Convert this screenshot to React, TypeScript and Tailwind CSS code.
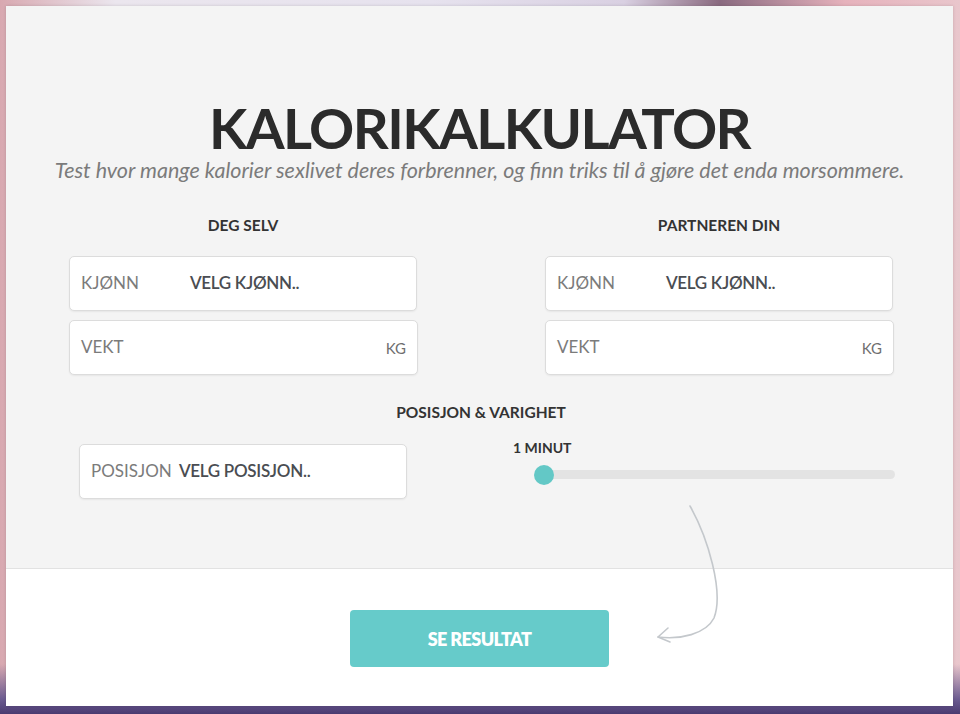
import React from "react";

function Field({ label, labelW, value, unit, w }: { label: string; labelW: string; value?: string; unit?: string; w: string }) {
  return (
    <div className={`${w} h-[55px] bg-white border border-[#dcdcdc] rounded-[5px] shadow-[0_1px_2px_rgba(0,0,0,0.06)] flex items-center pl-[11px] pr-[11px]`}>
      <span className={`${labelW} shrink-0 text-[17px] text-[#7b7b7b] leading-none -mt-[2px]`}>{label}</span>
      {value && <span className="text-[17px] font-semibold text-[#4a4d52] leading-none tracking-[-0.3px] -mt-[2px]">{value}</span>}
      {unit && <span className="ml-auto text-[15px] text-[#6f6f6f] leading-none mt-[2px]">{unit}</span>}
    </div>
  );
}

export default function App() {
  return (
    <div
      className="w-[960px] h-[714px] p-[6px] bg-[linear-gradient(180deg,rgba(255,255,255,0)_0%,rgba(255,255,255,0)_93%,#6a5a90_98%,#4a3a70_100%),linear-gradient(90deg,#d8a8b0_0%,#ebe6ee_12%,#e6e2ee_45%,#d9d0e2_65%,#8a6a80_75%,#e6b2bc_88%,#e9c6cc_100%)]"
      style={{ fontFamily: "Lato, 'Open Sans', sans-serif" }}
    >
      <div className="relative w-[947px] h-[700px] flex flex-col shadow-[0_0_3px_rgba(0,0,0,0.15)]">
        <div className="h-[563px] bg-[#f4f4f4] border-b border-[#e2e2e2] flex flex-col pt-[94px]">
          <h1 className="text-center text-[56px] font-bold leading-none text-[#2b2b2b] tracking-[-1.6px]">KALORIKALKULATOR</h1>
          <p className="text-center italic text-[21.5px] leading-none text-[#7b7b7b] mt-[4px]">
            Test hvor mange kalorier sexlivet deres forbrenner, og finn triks til å gjøre det enda morsommere.
          </p>

          <div className="flex pl-[63px] gap-[128px] mt-[36px]">
            <div className="w-[348px] flex flex-col">
              <div className="text-center text-[15.5px] font-bold leading-none text-[#333]">DEG SELV</div>
              <div className="flex flex-col gap-[9px] mt-[23px]">
                <Field w="w-[348px]" label="KJØNN" labelW="w-[109px]" value="VELG KJØNN.." />
                <Field w="w-[349px]" label="VEKT" labelW="w-[109px]" unit="KG" />
              </div>
            </div>
            <div className="w-[348px] flex flex-col">
              <div className="text-center text-[15.5px] font-bold leading-none text-[#333]">PARTNEREN DIN</div>
              <div className="flex flex-col gap-[9px] mt-[23px]">
                <Field w="w-[348px]" label="KJØNN" labelW="w-[109px]" value="VELG KJØNN.." />
                <Field w="w-[349px]" label="VEKT" labelW="w-[109px]" unit="KG" />
              </div>
            </div>
          </div>

          <div className="text-center text-[15.5px] font-bold leading-none text-[#333] mt-[30px] pl-[3px]">POSISJON &amp; VARIGHET</div>

          <div className="flex items-start pl-[73px] mt-[23px]">
            <Field w="w-[328px]" label="POSISJON" labelW="w-[88px]" value="VELG POSISJON.." />
            <div className="ml-[106px] w-[382px] flex flex-col">
              <div className="text-[14px] font-bold leading-none text-[#333] -mt-[3px]">1 MINUT</div>
              <div className="relative mt-[10px] h-[20px] flex items-center">
                <div className="ml-[25px] w-[357px] h-[9px] rounded-full bg-[#e3e3e3]" />
                <div className="absolute left-[21px] top-0 w-[20px] h-[20px] rounded-full bg-[#63c8c6]" />
              </div>
            </div>
          </div>
        </div>

        <div className="flex-1 bg-white flex justify-center pt-[41px]">
          <button className="w-[259px] h-[57px] rounded-[4px] bg-[#66cbca] text-white text-[18px] font-extrabold tracking-[-0.6px] leading-none">
            SE RESULTAT
          </button>
        </div>

        <svg className="absolute left-[644px] top-[494px]" width="80" height="150" viewBox="0 0 80 150" fill="none">
          <path d="M40 6 C58 38 74 92 64 118 C56 134 30 140 8 137" stroke="#c4c8cc" strokeWidth="1.6" strokeLinecap="round" />
          <path d="M18 128 L8 137 L20 142" stroke="#c4c8cc" strokeWidth="1.6" strokeLinecap="round" strokeLinejoin="round" />
        </svg>
      </div>
    </div>
  );
}
